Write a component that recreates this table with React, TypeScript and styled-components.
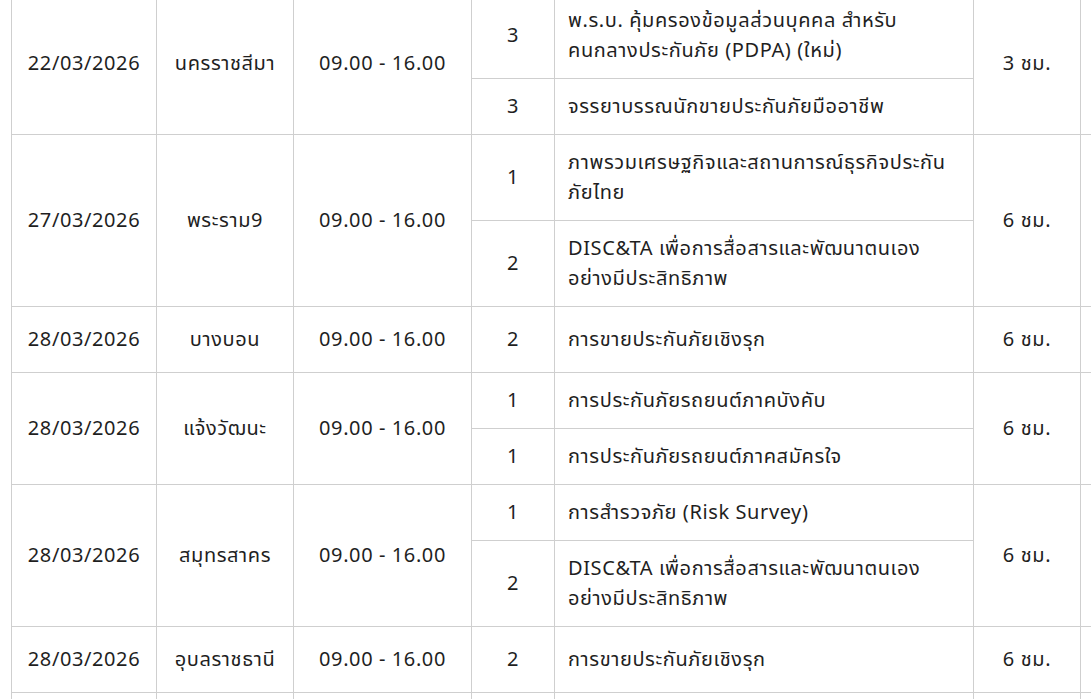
import styled, { createGlobalStyle } from 'styled-components'

const GlobalStyle = createGlobalStyle`
  html, body {
    margin: 0;
    padding: 0;
    background: #fff;
    overflow: hidden;
  }
  body {
    font-family: "Noto Sans Thai", "Noto Sans", "Liberation Sans", sans-serif;
    color: #1f1f1f;
  }
`

const Page = styled.div`
  padding-left: 11px;
  margin-top: -8px;
  width: 1300px;
`

const Schedule = styled.table`
  border-collapse: collapse;
  table-layout: fixed;
  font-size: 20px;
  line-height: 30px;
  letter-spacing: 0.6px;
`

const Col = styled.col<{ $w: number }>`
  width: ${(p) => p.$w}px;
`

// session-level cells (date, place, time, hours) sit in taller padding
const Cell = styled.td<{ $left?: boolean; $group?: boolean }>`
  border: 1px solid #cfcfcf;
  padding: ${(p) => (p.$group ? '18px 13px 17px' : '13px 13px 12px')};
  text-align: ${(p) => (p.$left ? 'left' : 'center')};
  vertical-align: middle;
  white-space: nowrap;
`

type Topic = { level: number; lines: string[] }
type Session = {
  date: string
  place: string
  time: string
  topics: Topic[]
  hours: string
}

const sessions: Session[] = [
  {
    date: '22/03/2026',
    place: 'นครราชสีมา',
    time: '09.00 - 16.00',
    topics: [
      { level: 3, lines: ['พ.ร.บ. คุ้มครองข้อมูลส่วนบุคคล สำหรับ', 'คนกลางประกันภัย (PDPA) (ใหม่)'] },
      { level: 3, lines: ['จรรยาบรรณนักขายประกันภัยมืออาชีพ'] },
    ],
    hours: '3 ชม.',
  },
  {
    date: '27/03/2026',
    place: 'พระราม9',
    time: '09.00 - 16.00',
    topics: [
      { level: 1, lines: ['ภาพรวมเศรษฐกิจและสถานการณ์ธุรกิจประกัน', 'ภัยไทย'] },
      { level: 2, lines: ['DISC&TA เพื่อการสื่อสารและพัฒนาตนเอง', 'อย่างมีประสิทธิภาพ'] },
    ],
    hours: '6 ชม.',
  },
  {
    date: '28/03/2026',
    place: 'บางบอน',
    time: '09.00 - 16.00',
    topics: [{ level: 2, lines: ['การขายประกันภัยเชิงรุก'] }],
    hours: '6 ชม.',
  },
  {
    date: '28/03/2026',
    place: 'แจ้งวัฒนะ',
    time: '09.00 - 16.00',
    topics: [
      { level: 1, lines: ['การประกันภัยรถยนต์ภาคบังคับ'] },
      { level: 1, lines: ['การประกันภัยรถยนต์ภาคสมัครใจ'] },
    ],
    hours: '6 ชม.',
  },
  {
    date: '28/03/2026',
    place: 'สมุทรสาคร',
    time: '09.00 - 16.00',
    topics: [
      { level: 1, lines: ['การสำรวจภัย (Risk Survey)'] },
      { level: 2, lines: ['DISC&TA เพื่อการสื่อสารและพัฒนาตนเอง', 'อย่างมีประสิทธิภาพ'] },
    ],
    hours: '6 ชม.',
  },
  {
    date: '28/03/2026',
    place: 'อุบลราชธานี',
    time: '09.00 - 16.00',
    topics: [{ level: 2, lines: ['การขายประกันภัยเชิงรุก'] }],
    hours: '6 ชม.',
  },
  {
    date: '',
    place: '',
    time: '',
    topics: [{ level: 0, lines: [''] }],
    hours: '',
  },
]

const widths = [145, 137, 178, 83, 419, 107, 160]

function TopicText({ lines }: { lines: string[] }) {
  return (
    <>
      {lines.map((line, i) => (
        <span key={i}>
          {i > 0 && <br />}
          {line}
        </span>
      ))}
    </>
  )
}

export default function App() {
  return (
    <Page>
      <GlobalStyle />
      <Schedule>
        <colgroup>
          {widths.map((w, i) => (
            <Col key={i} $w={w} />
          ))}
        </colgroup>
        <tbody>
          {sessions.map((s, si) =>
            s.topics.map((t, ti) => (
              <tr key={`${si}-${ti}`}>
                {ti === 0 && (
                  <>
                    <Cell $group rowSpan={s.topics.length}>{s.date}</Cell>
                    <Cell $group rowSpan={s.topics.length}>{s.place}</Cell>
                    <Cell $group rowSpan={s.topics.length}>{s.time}</Cell>
                  </>
                )}
                <Cell>{t.level || ''}</Cell>
                <Cell $left>
                  <TopicText lines={t.lines} />
                </Cell>
                {ti === 0 && (
                  <>
                    <Cell $group rowSpan={s.topics.length}>{s.hours}</Cell>
                    <Cell $group rowSpan={s.topics.length} />
                  </>
                )}
              </tr>
            ))
          )}
        </tbody>
      </Schedule>
    </Page>
  )
}
